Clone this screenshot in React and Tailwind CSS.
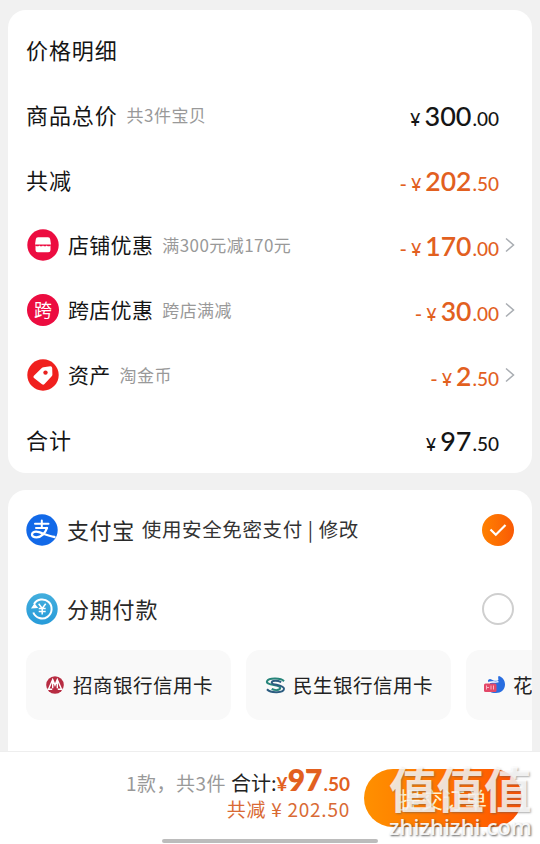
const latin = "font-['Lato','Noto_Sans_CJK_SC',sans-serif]";

function Price({ minus, whole, cents, dark }) {
  return (
    <div className={`flex items-baseline whitespace-nowrap leading-none ${latin} ${dark ? 'text-[#151515]' : 'pt-[2px] text-[#e2601f]'}`}>
      {minus && <span className="mr-[4px] text-[20px] font-medium">-</span>}
      <span className="mr-[4px] text-[18px] font-medium">¥</span>
      <span className={dark ? 'text-[27px] font-medium' : 'text-[26.500px] font-semibold'}>{whole}</span>
      <span className="ml-[1px] text-[19px] font-medium">.{cents}</span>
    </div>
  );
}

function Chevron() {
  return (
    <svg width="10" height="16" viewBox="0 0 10 16" fill="none" stroke="#a9adb2" strokeWidth="1.500">
      <path d="M1 1.500 8.500 8 1 14.500" />
    </svg>
  );
}

function ShopIcon() {
  return (
    <svg width="32" height="32" viewBox="0 0 32 32">
      <circle cx="16" cy="16" r="15.700" fill="#ec0c40" />
      <path d="M11 8.200h10q2 0 2.200 2l.8 5.300H8l.8-5.300q.2-2 2.200-2Z" fill="#fff" />
      <path d="M8.500 16.500q2 1.700 3.800 0 1.900 1.700 3.700 0 1.900 1.700 3.700 0 1.900 1.700 3.800 0v4.500q0 2.300-2.200 2.300H10.700q-2.200 0-2.200-2.300Z" fill="#fff" />
    </svg>
  );
}

function CrossIcon() {
  return (
    <span className="flex size-[32px] items-center justify-center rounded-full bg-[#ec0c40] pb-[1px] text-[18px] leading-none text-white">
      跨
    </span>
  );
}

function TagIcon() {
  return (
    <svg width="32" height="32" viewBox="0 0 32 32">
      <circle cx="16" cy="16" r="15.700" fill="#f0201e" />
      <path d="M16.500 8.200 23.300 7.300q1.800-.1 1.900 1.700l.2 6.500q0 1-.7 1.700l-7.200 7.800q-1.200 1.200-2.500.2L7 19.100q-1.300-1.200-.1-2.400l7.900-7.700q.7-.7 1.700-.8Z" fill="#fff" />
      <circle cx="18.500" cy="13.600" r="2.200" fill="#e8201e" />
    </svg>
  );
}

function AlipayIcon() {
  return (
    <svg width="32" height="32" viewBox="0 0 32 32" fill="none" stroke="#fff" strokeLinecap="round">
      <circle cx="16" cy="16" r="15.700" fill="#1269e8" stroke="none" />
      <path d="M9 9.700h13.500M15.800 6.500v7.500M10 14h11" strokeWidth="2" />
      <path d="M21 14c-1.500 4.500-5.500 9.300-10.500 9.300-2.900 0-4.800-1.200-4.500-3.200.3-2.200 3.600-3.100 7-1.900 4.500 1.500 9.500 3.800 15.500 4.800" strokeWidth="2.300" />
    </svg>
  );
}

function InstallmentIcon() {
  return (
    <svg width="32" height="32" viewBox="0 0 32 32" fill="none" stroke="#fff">
      <defs>
        <linearGradient id="installment" x1="0" y1="0" x2="0" y2="1">
          <stop stopColor="#43aedd" />
          <stop offset="1" stopColor="#279bd9" />
        </linearGradient>
      </defs>
      <circle cx="16" cy="16" r="15.700" fill="url(#installment)" stroke="none" />
      <path d="M8 11A9.500 9.500 0 1 1 7.300 19.500" strokeWidth="2" />
      <path d="M5 15.600 8.500 10.200l3.700 4.900Z" fill="#fff" stroke="none" />
      <path d="m12.700 10.800 3.500 4.700 3.500-4.700M16.200 15.500V21.500M12.700 15.600h7M12.700 18.400h7" strokeWidth="1.500" />
    </svg>
  );
}

function CmbIcon() {
  return (
    <svg width="18" height="18" viewBox="0 0 18 18">
      <circle cx="9" cy="9" r="8.800" fill="#b72c42" />
      <path d="m2.700 12.700 4-9.200 2.300 5.600 2.300-5.600 4 9.200M6.700 5v7.200M11.300 5v7.200M1.500 13.200h4.700M11.800 13.200h4.700" fill="none" stroke="#fff" strokeWidth="1.400" />
    </svg>
  );
}

function CmbcIcon() {
  return (
    <svg width="21" height="17" viewBox="0 0 22 18" fill="none" strokeWidth="2.100">
      <path d="M20 4.500C17 1 4 .5 2 4.500s14 4 14 7-6 3-9 1" stroke="#27857a" />
      <path d="M17 5.500C13 3.500 7 3.500 7 6s13 2 13 6.500-14 5-18 .5" stroke="#2c5c80" />
    </svg>
  );
}

function HuabeiIcon() {
  return (
    <svg width="22" height="18" viewBox="0 0 22 18">
      <path d="M4 5.500c-.5-2 2-3.500 3.500-2 2 1.500 4.500 1.500 6.500 1 1-.8-.5-2.500.5-4.500C18 .5 21 4 21 8.500c0 5-4 8.500-9 8.500-3 0-5-.5-6-1.500V7Z" fill="#286de0" />
      <path d="M5 6.500c3-1.500 6 .5 9.500-.8" fill="none" stroke="#fff" strokeWidth="1.400" />
      <rect x="0" y="7.500" width="12.500" height="8.500" rx="1.500" fill="#e34868" />
      <path d="M2.500 9.500v4M2.500 11.500h2.500M7 9.500v4M9.500 9.500v4" stroke="#f7b5c4" strokeWidth="1" />
    </svg>
  );
}

function DetailRow({ icon, label, note, children, arrow }) {
  return (
    <div className="flex h-[65px] items-center">
      {icon && <span className="mr-[9px] ml-[1px] shrink-0 pb-[2px]">{icon}</span>}
      <span className={icon ? 'pb-[2px] text-[21px] tracking-[0.300px]' : 'pb-[3px] text-[22px] tracking-[0.900px]'}>{label}</span>
      {note && <span className="ml-[9px] pb-[2px] text-[17px] tracking-[0.450px] text-[#999]">{note}</span>}
      <div className="ml-auto flex items-center">
        <div>{children}</div>
        <span className="ml-[6px] w-[11px] pb-[1px]">{arrow && <Chevron />}</span>
      </div>
    </div>
  );
}

function BankTile({ icon, name }) {
  return (
    <div className="flex h-[70px] w-[205px] shrink-0 items-center rounded-[14px] bg-[#f9f9f9] pl-[18px]">
      <span className="flex w-[22px] justify-center">{icon}</span>
      <span className="ml-[7px] whitespace-nowrap text-[19.500px] tracking-[0.500px] text-[#222]">{name}</span>
    </div>
  );
}

export default function App() {
  return (
    <div className="flex h-[844px] w-[540px] flex-col overflow-hidden bg-[#f1f1f1] pt-[10px] font-['Noto_Sans_CJK_SC',sans-serif] leading-none text-[#151515]">
      <section className="mx-[8px] h-[463px] shrink-0 rounded-[18px] bg-white pt-[8px] pr-[16px] pl-[18px]">
        <DetailRow label="价格明细" />
        <DetailRow label="商品总价" note="共3件宝贝"><Price whole="300" cents="00" dark /></DetailRow>
        <DetailRow label="共减"><Price minus whole="202" cents="50" /></DetailRow>
        <DetailRow icon={<ShopIcon />} label="店铺优惠" note="满300元减170元" arrow><Price minus whole="170" cents="00" /></DetailRow>
        <DetailRow icon={<CrossIcon />} label="跨店优惠" note="跨店满减" arrow><Price minus whole="30" cents="00" /></DetailRow>
        <DetailRow icon={<TagIcon />} label="资产" note="淘金币" arrow><Price minus whole="2" cents="50" /></DetailRow>
        <DetailRow label="合计"><Price whole="97" cents="50" dark /></DetailRow>
      </section>

      <section className="mx-[8px] mt-[17px] h-[261px] shrink-0 overflow-hidden rounded-t-[18px] bg-white pl-[18px]">
        <div className="flex h-[79px] items-center pr-[18px]">
          <AlipayIcon />
          <span className="ml-[9px] pb-[1px] text-[22px] tracking-[0.600px] text-[#292929]">支付宝</span>
          <span className="ml-[7px] pb-[1px] text-[19.500px] tracking-[0.620px] text-[#333]">使用安全免密支付 | 修改</span>
          <span className="ml-auto flex size-[32px] items-center justify-center rounded-full bg-linear-to-r from-[#ff8000] to-[#f95a05]">
            <svg width="18" height="14" viewBox="0 0 18 14" fill="none" stroke="#fff" strokeWidth="2.200"><path d="m1.500 6.500 5.300 5.300L16.500 2" /></svg>
          </span>
        </div>
        <div className="flex h-[80px] items-center pr-[18px]">
          <InstallmentIcon />
          <span className="ml-[9px] pb-[2px] text-[22px] tracking-[0.800px] text-[#292929]">分期付款</span>
          <span className="ml-auto size-[32px] rounded-full border-2 border-[#cfcfcf]" />
        </div>
        <div className="mt-[1px] flex gap-[15px]">
          <BankTile icon={<CmbIcon />} name="招商银行信用卡" />
          <BankTile icon={<CmbcIcon />} name="民生银行信用卡" />
          <BankTile icon={<HuabeiIcon />} name="花呗分期" />
        </div>
      </section>

      <footer className="relative flex h-[93px] shrink-0 border-t border-[#eeeeee] bg-white">
        <div className="flex w-[350px] flex-col items-end pt-[12px]">
          <div className="flex items-baseline whitespace-nowrap">
            <span className="text-[19px] tracking-[0.500px] text-[#999]">1款，共3件</span>
            <span className="ml-[5px] text-[20px] text-[#222]">合计:</span>
            <span className={`text-[19px] font-bold text-[#e2601f] ${latin}`}>¥</span>
            <span className={`text-[30px] font-extrabold text-[#e2601f] ${latin}`}>97</span>
            <span className={`ml-[1px] text-[19px] font-bold text-[#e2601f] ${latin}`}>.50</span>
          </div>
          <div className="mt-[5px] text-[19px] tracking-[0.750px] text-[#d96a35]">共减 ¥ 202.50</div>
        </div>
        <button className="mt-[17px] ml-[14px] h-[58px] w-[158px] rounded-full bg-linear-to-r from-[#ff9000] to-[#ff5000] text-[22px] text-[#fff3d0]">提交订单</button>
        <div className="absolute top-[10px] left-[389px] w-[146px] text-white/80 [text-shadow:1px_1px_2px_rgba(90,90,90,0.500)]">
          <div className="text-[47.500px] leading-[52px] font-bold">值值值</div>
          <div className="font-['Noto_Sans',sans-serif] text-[22px] leading-[24px] font-medium tracking-[0.100px] text-white/90 [text-shadow:1px_1px_2px_rgba(60,60,60,0.800)]">zhizhizhi.com</div>
        </div>
        <div className="absolute top-[87px] left-[162px] h-[4px] w-[216px] rounded-full bg-[#bcbcbc]" />
      </footer>
    </div>
  );
}
